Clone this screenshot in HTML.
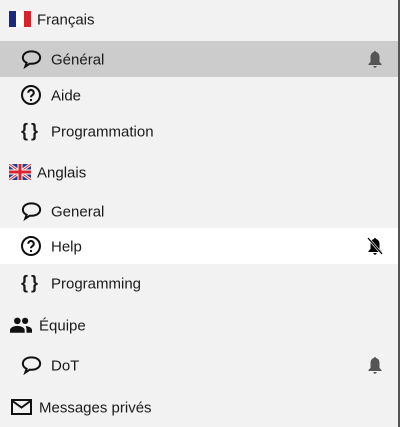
<!DOCTYPE html>
<html><head><style>
body{margin:0;width:400px;height:427px;background:#f2f2f2;font-family:"Liberation Sans",sans-serif;font-size:15px;color:#1a1a1a;position:relative;overflow:hidden}
.r{position:absolute;left:0;width:398px;height:36px}
.t{position:absolute;top:50%;transform:translateY(-45%);white-space:nowrap}
.i{position:absolute;top:50%;transform:translateY(-50%)}
.edge{position:absolute;right:0;top:0;width:2px;height:427px;background:#555}
</style></head><body>
<div class="r" style="top:1px"><svg class="i" style="left:9px" width="22" height="16" viewBox="0 0 22 16"><rect width="7" height="16" fill="#1a2a7a"/><rect x="7" width="8" height="16" fill="#fff"/><rect x="15" width="7" height="16" fill="#d8232a"/></svg><span class="t" style="left:37px">Français</span></div>
<div class="r" style="top:41px;background:#cccccc"><svg class="i" style="left:20px" width="23" height="23" viewBox="0 0 24 24"><path d="M12 4C6.5 4 3 7 3 10.5c0 2.3 1.5 4.3 3.9 5.4L5.5 20l4.6-3.1c.6.1 1.2.1 1.9.1 5.5 0 9-3 9-6.5S17.5 4 12 4z" fill="none" stroke="#111" stroke-width="2.1"/></svg><span class="t" style="left:51px">Général</span><svg class="i" style="left:367px" width="16" height="18" viewBox="0 0 16 18"><path d="M8 1c.8 0 1 .6 1 1 2.5.6 3.5 2.8 3.5 5v5l2 2v1H1.5v-1l2-2V7c0-2.2 1-4.4 3.5-5 0-.4.2-1 1-1zM6.3 16h3.4c0 1-.8 1.7-1.7 1.7S6.3 17 6.3 16z" fill="#555"/></svg></div>
<div class="r" style="top:77px"><svg class="i" style="left:20px" width="22" height="22" viewBox="0 0 24 24"><circle cx="12" cy="12" r="9.8" fill="none" stroke="#111" stroke-width="2.2"/><path d="M9 9.5a3 3 0 1 1 4.5 2.6c-1 .6-1.5 1.1-1.5 2.4" fill="none" stroke="#111" stroke-width="2.2"/><circle cx="12" cy="17.5" r="1.3" fill="#111"/></svg><span class="t" style="left:51px">Aide</span></div>
<div class="r" style="top:113px"><span class="i" style="left:21px;font-weight:bold;font-size:18px;letter-spacing:3px">{}</span><span class="t" style="left:51px">Programmation</span></div>
<div class="r" style="top:154px"><svg class="i" style="left:9px" width="22" height="16" viewBox="0 0 22 16"><rect width="22" height="16" fill="#2a3a8a"/><path d="M0 0L22 16M22 0L0 16" stroke="#fff" stroke-width="3"/><path d="M0 0L22 16M22 0L0 16" stroke="#d8232a" stroke-width="1"/><path d="M11 0V16M0 8H22" stroke="#fff" stroke-width="5"/><path d="M11 0V16M0 8H22" stroke="#d8232a" stroke-width="3"/></svg><span class="t" style="left:37px">Anglais</span></div>
<div class="r" style="top:193px"><svg class="i" style="left:20px" width="23" height="23" viewBox="0 0 24 24"><path d="M12 4C6.5 4 3 7 3 10.5c0 2.3 1.5 4.3 3.9 5.4L5.5 20l4.6-3.1c.6.1 1.2.1 1.9.1 5.5 0 9-3 9-6.5S17.5 4 12 4z" fill="none" stroke="#111" stroke-width="2.1"/></svg><span class="t" style="left:51px">General</span></div>
<div class="r" style="top:228px;background:#fff"><svg class="i" style="left:20px" width="22" height="22" viewBox="0 0 24 24"><circle cx="12" cy="12" r="9.8" fill="none" stroke="#111" stroke-width="2.2"/><path d="M9 9.5a3 3 0 1 1 4.5 2.6c-1 .6-1.5 1.1-1.5 2.4" fill="none" stroke="#111" stroke-width="2.2"/><circle cx="12" cy="17.5" r="1.3" fill="#111"/></svg><span class="t" style="left:51px">Help</span><svg class="i" style="left:367px" width="16" height="18" viewBox="0 0 16 18"><path d="M8 1c.8 0 1 .6 1 1 2.5.6 3.5 2.8 3.5 5v5l2 2v1H1.5v-1l2-2V7c0-2.2 1-4.4 3.5-5 0-.4.2-1 1-1zM6.3 16h3.4c0 1-.8 1.7-1.7 1.7S6.3 17 6.3 16z" fill="#000"/><path d="M1 1L15 17" stroke="#fff" stroke-width="2.5"/><path d="M1 1L15 17" stroke="#000" stroke-width="1.3"/></svg></div>
<div class="r" style="top:265px"><span class="i" style="left:21px;font-weight:bold;font-size:18px;letter-spacing:3px">{}</span><span class="t" style="left:51px">Programming</span></div>
<div class="r" style="top:307px"><svg class="i" style="left:10px" width="22" height="16" viewBox="0 0 24 17"><circle cx="8" cy="4" r="3.6" fill="#111"/><circle cx="16.5" cy="4" r="3.4" fill="#111"/><path d="M0 17v-3c0-3 5-4.5 8-4.5s8 1.5 8 4.5v3z" fill="#111"/><path d="M17 9.6c3 .3 7 1.6 7 4.4v3h-6v-3c0-1.7-.4-3-1-4.4z" fill="#111"/></svg><span class="t" style="left:39px">Équipe</span></div>
<div class="r" style="top:347px"><svg class="i" style="left:20px" width="23" height="23" viewBox="0 0 24 24"><path d="M12 4C6.5 4 3 7 3 10.5c0 2.3 1.5 4.3 3.9 5.4L5.5 20l4.6-3.1c.6.1 1.2.1 1.9.1 5.5 0 9-3 9-6.5S17.5 4 12 4z" fill="none" stroke="#111" stroke-width="2.1"/></svg><span class="t" style="left:51px">DoT</span><svg class="i" style="left:367px" width="16" height="18" viewBox="0 0 16 18"><path d="M8 1c.8 0 1 .6 1 1 2.5.6 3.5 2.8 3.5 5v5l2 2v1H1.5v-1l2-2V7c0-2.2 1-4.4 3.5-5 0-.4.2-1 1-1zM6.3 16h3.4c0 1-.8 1.7-1.7 1.7S6.3 17 6.3 16z" fill="#555"/></svg></div>
<div class="r" style="top:389px"><svg class="i" style="left:11px" width="21" height="16" viewBox="0 0 21 16"><rect x="1" y="1" width="19" height="14" fill="none" stroke="#111" stroke-width="2"/><path d="M1.5 2L10.5 8.5 19.5 2" fill="none" stroke="#111" stroke-width="2"/></svg><span class="t" style="left:39px">Messages privés</span></div>
<div class="edge"></div>
</body></html>
